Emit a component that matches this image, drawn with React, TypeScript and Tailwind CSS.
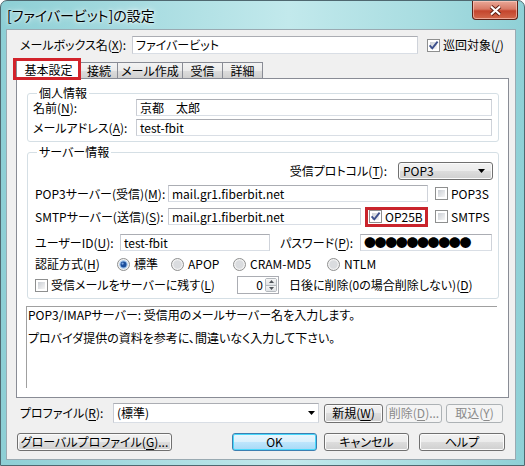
import React from 'react';

// Windows 7 style dialog: mailbox settings
const U = ({ children }: { children: React.ReactNode }) => (
  <span className="underline underline-offset-[2px]">{children}</span>
);

function CheckBox({ checked = false }: { checked?: boolean }) {
  return (
    <span className="flex h-[13px] w-[13px] shrink-0 items-center justify-center border border-[#8e8f8f] bg-white p-[2px]">
      <span className="relative flex h-full w-full items-center justify-center bg-gradient-to-br from-[#cbcfd5] to-[#f6f6f6]">
        {checked && (
          <svg width="9" height="9" viewBox="0 0 9 9" className="absolute overflow-visible">
            <path d="M0.6 4.4 L3.3 7.3 L8.6 0.6" fill="none" stroke="#3c4f8c" strokeWidth="1.9" />
          </svg>
        )}
      </span>
    </span>
  );
}

function Radio({ on = false }: { on?: boolean }) {
  return (
    <svg width="13" height="13" viewBox="0 0 13 13" className="shrink-0">
      <circle cx="6.5" cy="6.5" r="6" fill="#f2f2f2" stroke="#8e8f8f" />
      <circle cx="6.5" cy="6.5" r="4.2" fill={on ? '#9fc3ea' : '#dadcdf'} />
      {on && <circle cx="6.5" cy="6.5" r="3" fill="#1d4f9c" />}
      {on && <circle cx="5.6" cy="5.6" r="1.1" fill="#7fa9e0" />}
    </svg>
  );
}

function Arrow() {
  return (
    <svg width="7" height="4" viewBox="0 0 7 4" className="shrink-0">
      <path d="M0 0h7L3.5 4z" fill="#000" />
    </svg>
  );
}

const field =
  'flex items-center border border-[#abadb3] border-l-[#c9ccd3] border-r-[#cfd3da] border-b-[#d9dee5] bg-white px-[3px]';
const btn =
  'flex items-center justify-center rounded-[3px] border border-[#707070] bg-[linear-gradient(#f2f2f2_0%,#ebebeb_50%,#dddddd_50%,#cfcfcf_100%)] shadow-[inset_0_0_0_1px_#fbfbfb]';
const btnOff =
  'flex items-center justify-center rounded-[3px] border border-[#adb2b5] bg-[#f4f4f4] text-[#8a8a8a]';
const tabOff =
  '-ml-[1px] flex h-[16px] items-center justify-center border border-b-0 border-[#898c95] bg-[linear-gradient(#f3f3f3_0%,#ebebeb_50%,#dddddd_50%,#cfcfcf_100%)]';

export default function App() {
  return (
    <div className="h-[466px] w-[525px] overflow-hidden bg-white">
      <div className="flex h-[466px] w-[525px] flex-col rounded-t-[7px] border border-[#4f6870] bg-[linear-gradient(90deg,#8dcfd5_0%,#a6dbe0_25%,#c2e9ec_55%,#a9dde1_80%,#8fd0d6_100%)] font-['Noto_Sans_CJK_JP',sans-serif] text-[12px] leading-[14px] text-black [font-feature-settings:'palt']">
        {/* title bar */}
        <div className="flex h-[28px] shrink-0 items-start justify-between">
          <span className="pl-[6px] pt-[5px] text-[14px] leading-[18px] [text-shadow:0_0_7px_#ffffff,0_0_3px_#ffffff]">
            [ファイバービット]の設定
          </span>
          <div className="mr-[6px] flex h-[19px] w-[46px] items-center justify-center rounded-b-[4px] border border-t-0 border-[#5b2217] bg-[linear-gradient(#e9a898_0%,#d87a66_45%,#c4452d_55%,#d2694c_100%)] shadow-[inset_0_0_0_1px_rgba(255,210,200,0.6)]">
            <svg width="13" height="11" viewBox="0 0 13 11">
              <path d="M2 1.5 L11 9.5 M11 1.5 L2 9.5" stroke="#5a1c10" strokeWidth="4" />
              <path d="M2 1.5 L11 9.5 M11 1.5 L2 9.5" stroke="#ffffff" strokeWidth="2.2" />
            </svg>
          </div>
        </div>

        {/* client area */}
        <div className="ml-[5px] flex h-[431px] w-[510px] shrink-0 flex-col border border-[#9aaab2] bg-[#f0f0f0]">
          <div className="mt-[6px] flex h-[18px] items-center pl-[13px]">
            <span className="w-[112px]">
              メールボックス名(<U>X</U>):
            </span>
            <div className={`${field} h-[18px] w-[286px]`}>ファイバービット</div>
            <span className="ml-[9px]">
              <CheckBox checked />
            </span>
            <span className="ml-[3px]">
              巡回対象(<U>/</U>)
            </span>
          </div>

          {/* tabs */}
          <div className="ml-[9px] mt-[5px] flex h-[19px] items-end">
            <div className="relative z-10 -mb-[1px] flex h-[20px] w-[65px] items-center justify-center border border-b-0 border-[#898c95] bg-white">
              基本設定
              <span className="absolute -bottom-[1px] -left-[4px] -right-[1px] -top-[2px] border-[3px] border-[#d2232b]" />
            </div>
            <div className={`${tabOff} w-[38px]`}>接続</div>
            <div className={`${tabOff} w-[66px]`}>メール作成</div>
            <div className={`${tabOff} w-[41px]`}>受信</div>
            <div className={`${tabOff} w-[41px]`}>詳細</div>
          </div>

          <div className="ml-[9px] flex h-[320px] w-[493px] flex-col border border-[#898c95] bg-white">
            <fieldset className="ml-[10px] mt-[8px] w-[472px] rounded-[3px] border border-[#d5dfe5] pb-[5px] pl-[5px]">
              <legend className="ml-[4px] px-[2px] leading-[12px]">個人情報</legend>
              <div className="flex h-[17px] items-center">
                <span className="w-[103px]">
                  名前(<U>N</U>):
                </span>
                <div className={`${field} h-[17px] w-[356px]`}>京都　太郎</div>
              </div>
              <div className="mt-[3px] flex h-[17px] items-center">
                <span className="w-[103px]">
                  メールアドレス(<U>A</U>):
                </span>
                <div className={`${field} h-[17px] w-[356px]`}>test-fbit</div>
              </div>
            </fieldset>

            <fieldset className="ml-[10px] mt-[4px] w-[472px] rounded-[3px] border border-[#d5dfe5] pb-[4px] pl-[7px]">
              <legend className="ml-[2px] px-[2px] leading-[12px]">サーバー情報</legend>
              <div className="mt-[4px] flex h-[18px] items-center justify-end pr-[5px]">
                <span>
                  受信プロトコル(<U>T</U>):
                </span>
                <div className={`${btn} ml-[11px] h-[18px] w-[95px] !justify-between pl-[4px] pr-[7px]`}>
                  <span>POP3</span>
                  <Arrow />
                </div>
              </div>
              <div className="mt-[5px] flex h-[17px] items-center">
                <span className="w-[133px]">
                  POP3サーバー(受信)(<U>M</U>):
                </span>
                <div className={`${field} h-[17px] w-[260px]`}>mail.gr1.fiberbit.net</div>
                <span className="ml-[7px]">
                  <CheckBox />
                </span>
                <span className="ml-[3px]">POP3S</span>
              </div>
              <div className="mt-[6px] flex h-[17px] items-center">
                <span className="w-[133px]">
                  SMTPサーバー(送信)(<U>S</U>):
                </span>
                <div className={`${field} h-[17px] w-[193px]`}>mail.gr1.fiberbit.net</div>
                <div className="relative ml-[8px] flex h-[17px] w-[59px] items-center">
                  <CheckBox checked />
                  <span className="ml-[3px]">OP25B</span>
                  <span className="absolute -bottom-[2px] -left-[4px] -right-[0px] -top-[1px] border-[3px] border-[#c9242c]" />
                </div>
                <span className="ml-[7px]">
                  <CheckBox />
                </span>
                <span className="ml-[3px]">SMTPS</span>
              </div>
              <div className="mt-[9px] flex h-[17px] items-center">
                <span className="w-[85px]">
                  ユーザーID(<U>U</U>):
                </span>
                <div className={`${field} h-[17px] w-[150px]`}>test-fbit</div>
                <span className="ml-[10px] w-[80px]">
                  パスワード(<U>P</U>):
                </span>
                <div className={`${field} h-[17px] w-[132px] tracking-[-1.4px] [font-feature-settings:normal]`}>
                  ●●●●●●●●●●
                </div>
              </div>
              <div className="mt-[6px] flex h-[14px] items-center">
                <span className="w-[82px]">
                  認証方式(<U>H</U>)
                </span>
                <span className="flex w-[54px] items-center">
                  <Radio on />
                  <span className="ml-[4px]">標準</span>
                </span>
                <span className="flex w-[62px] items-center">
                  <Radio />
                  <span className="ml-[4px]">APOP</span>
                </span>
                <span className="flex w-[94px] items-center">
                  <Radio />
                  <span className="ml-[4px]">CRAM-MD5</span>
                </span>
                <span className="flex items-center">
                  <Radio />
                  <span className="ml-[4px]">NTLM</span>
                </span>
              </div>
              <div className="mt-[5px] flex h-[18px] items-center">
                <span className="flex w-[202px] items-center">
                  <CheckBox />
                  <span className="ml-[3px]">
                    受信メールをサーバーに残す(<U>L</U>)
                  </span>
                </span>
                <div className="flex h-[18px] w-[42px] items-stretch border border-[#abadb3] bg-white">
                  <span className="flex-1 pr-[2px] text-right leading-[16px]">0</span>
                  <div className="my-[1px] mr-[1px] flex w-[12px] flex-col rounded-[2px] border border-[#b4b9be]">
                    <span className="flex flex-1 items-center justify-center border-b border-[#b4b9be] bg-[linear-gradient(#f6f6f6,#e0e3e6)]">
                      <svg width="5" height="3" viewBox="0 0 5 3">
                        <path d="M0 3h5L2.5 0z" fill="#4d5258" />
                      </svg>
                    </span>
                    <span className="flex flex-1 items-center justify-center bg-[linear-gradient(#f6f6f6,#e0e3e6)]">
                      <svg width="5" height="3" viewBox="0 0 5 3">
                        <path d="M0 0h5L2.5 3z" fill="#4d5258" />
                      </svg>
                    </span>
                  </div>
                </div>
                <span className="ml-[10px]">
                  日後に削除(0の場合削除しない)(<U>D</U>)
                </span>
              </div>
            </fieldset>

            <div className="ml-[9px] mt-[7px] h-[82px] w-[471px] border-l border-t border-[#a0a0a0] pl-[1px] pt-[1px]">
              <p>POP3/IMAPサーバー: 受信用のメールサーバー名を入力します。</p>
              <p className="mt-[9px]">プロバイダ提供の資料を参考に、間違いなく入力して下さい。</p>
            </div>
          </div>

          {/* profile row */}
          <div className="mt-[5px] flex h-[20px] items-center pl-[13px]">
            <span className="w-[93px]">
              プロファイル(<U>R</U>):
            </span>
            <div className={`${field} h-[20px] w-[206px] justify-between pr-[3px]`}>
              <span>(標準)</span>
              <Arrow />
            </div>
            <div className={`${btn} ml-[5px] h-[19px] w-[59px]`}>
              新規(<U>W</U>)
            </div>
            <div className={`${btnOff} ml-[3px] h-[19px] w-[56px]`}>
              削除(<U>D</U>)...
            </div>
            <div className={`${btnOff} ml-[4px] h-[19px] w-[57px]`}>
              取込(<U>Y</U>)
            </div>
          </div>

          {/* bottom buttons */}
          <div className="mt-[10px] flex h-[18px] items-center pl-[10px]">
            <div className={`${btn} h-[18px] w-[155px]`}>
              グローバルプロファイル(<U>G</U>)...
            </div>
            <div className="ml-[60px] flex h-[18px] w-[85px] items-center justify-center rounded-[3px] border border-[#3c7fb1] bg-[linear-gradient(#eaf6fd_0%,#d9f0fc_50%,#bee6fd_50%,#a7d9f5_100%)] shadow-[inset_0_0_0_1px_#48d8fb]">
              OK
            </div>
            <div className={`${btn} ml-[7px] h-[18px] w-[85px]`}>キャンセル</div>
            <div className={`${btn} ml-[10px] h-[18px] w-[86px]`}>ヘルプ</div>
          </div>
        </div>
      </div>
    </div>
  );
}
